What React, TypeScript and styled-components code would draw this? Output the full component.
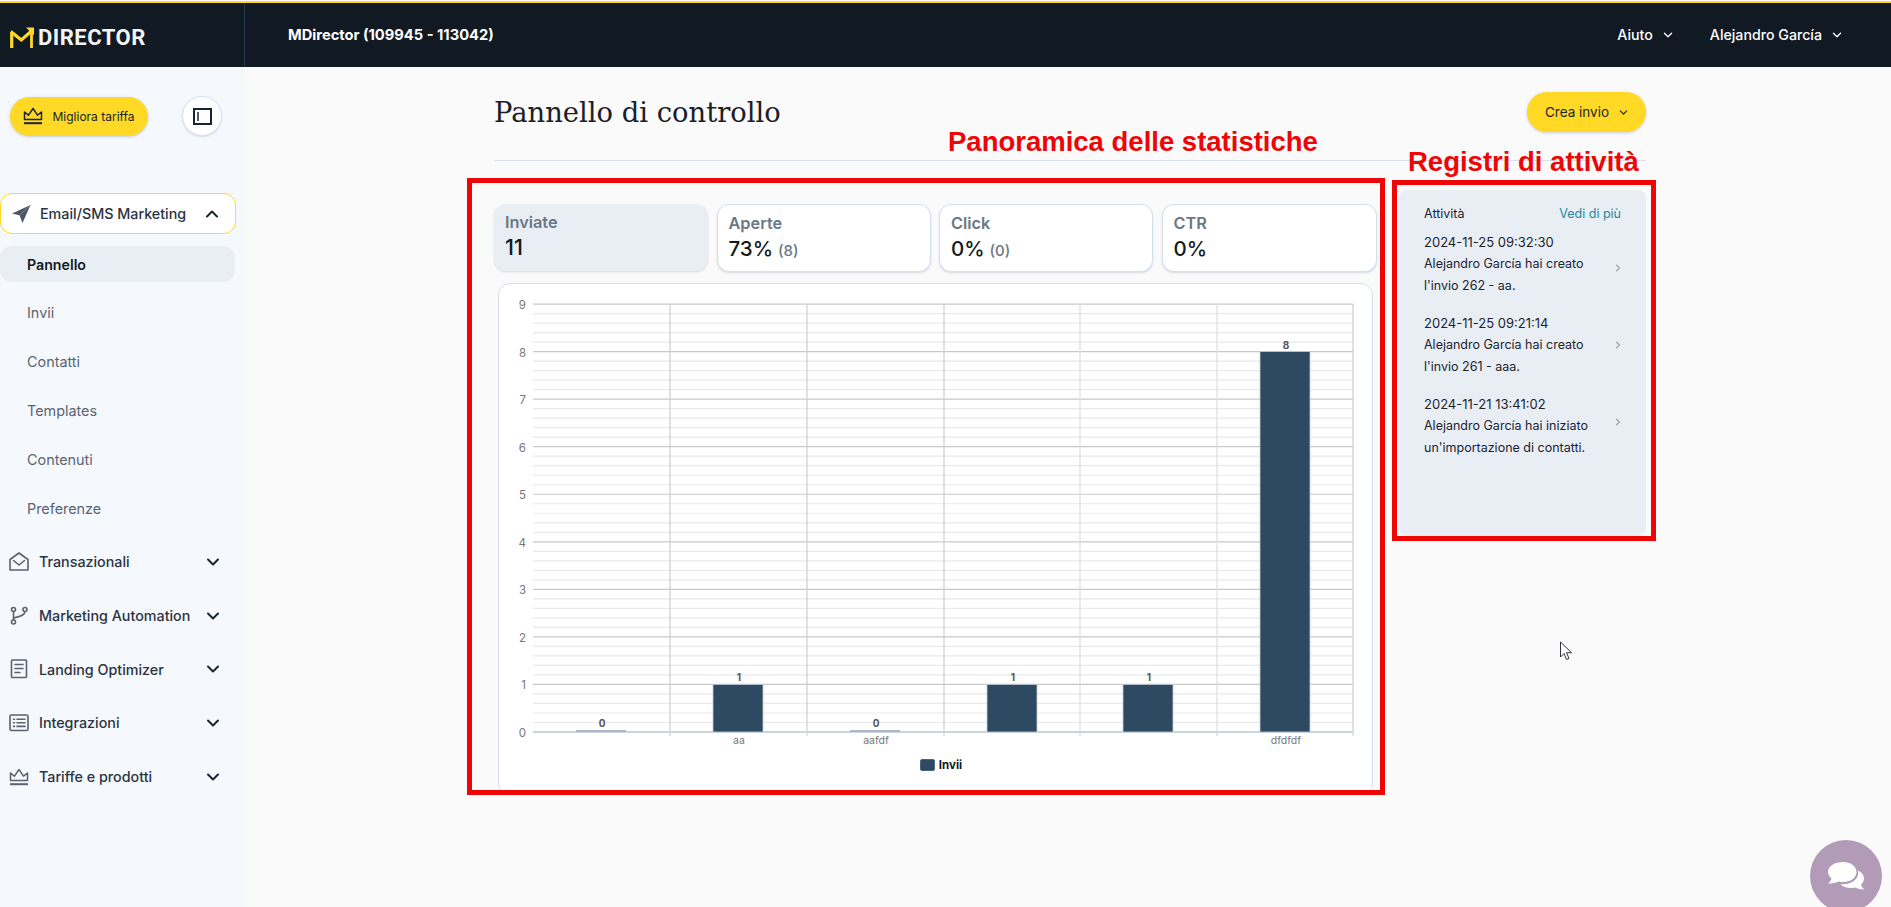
import React from "react";
import styled, { createGlobalStyle } from "styled-components";

const Global = createGlobalStyle`
  html, body { margin: 0; padding: 0; background: #fafafa; }
  body { font-family: Inter, "Liberation Sans", sans-serif; color: #111a22; overflow: hidden; }
  * { box-sizing: border-box; }
`;

const Page = styled.div`
  position: relative;
  width: 1891px;
  height: 907px;
  overflow: hidden;
  display: flex;
  flex-direction: column;
`;

const TopBar = styled.header`
  height: 66px;
  margin-top: 1px;
  flex: none;
  display: flex;
  background: #111a22;
  border-top: 2px solid #ffd925;
`;

const Brand = styled.div`
  width: 245px;
  flex: none;
  display: flex;
  align-items: center;
  gap: 4px;
  padding: 4px 0 0 10px;
  border-right: 1px solid #24394f;
`;

const BrandText = styled.span`
  font-family: Roboto, sans-serif;
  font-weight: 700;
  font-size: 22px;
  letter-spacing: 0.5px;
  color: #f4f5f6;
`;

const TopBarRow = styled.div`
  flex: 1;
  display: flex;
  align-items: center;
  justify-content: space-between;
  padding: 0 49px 0 43px;
  margin-top: -1px;
  color: #fff;
`;

const Account = styled.span`
  font-weight: 700;
  font-size: 14.7px;
`;

const TopMenu = styled.div`
  display: flex;
  gap: 37px;
`;

const TopMenuItem = styled.span`
  display: flex;
  align-items: center;
  gap: 10px;
  font-weight: 500;
  font-size: 14.2px;
`;

const Body = styled.div`
  flex: 1;
  display: flex;
  min-height: 0;
`;

const Sidebar = styled.aside`
  width: 244px;
  flex: none;
  background: #f5f8fd;
  display: flex;
  flex-direction: column;
  padding-top: 29px;
`;

const SidebarTools = styled.div`
  display: flex;
  align-items: center;
  gap: 34px;
  padding-left: 10px;
  margin-bottom: 57px;
`;

const UpgradeButton = styled.button`
  width: 138px;
  height: 39px;
  display: flex;
  align-items: center;
  justify-content: center;
  gap: 9px;
  border: 0;
  border-radius: 20px;
  background: #ffd925;
  box-shadow: 0 1px 3px rgba(60, 70, 90, 0.25);
  font: 400 12px Inter, sans-serif;
  color: #1a2430;
  padding: 0;
`;

const RoundButton = styled.button`
  width: 40px;
  height: 40px;
  display: flex;
  align-items: center;
  justify-content: center;
  border-radius: 50%;
  border: 1px solid #d7e2ee;
  background: #fff;
  box-shadow: 0 1px 2px rgba(60, 70, 90, 0.15);
  padding: 0;
`;

const OpenGroup = styled.div`
  height: 41px;
  width: 236px;
  display: flex;
  align-items: center;
  padding-left: 10px;
  border: 1px solid #ffd925;
  border-radius: 12px;
  background: #fff;
  font-size: 14.3px;
  font-weight: 500;
  color: #2a3442;
  margin-bottom: 12px;
`;

const GroupIcon = styled.span`
  width: 29px;
  flex: none;
  display: flex;
  align-items: center;
`;

const GroupLabel = styled.span`
  flex: 1;
  white-space: nowrap;
`;

const GroupChevron = styled.span`
  width: 30px;
  flex: none;
  display: flex;
  align-items: center;
`;

const SubItem = styled.div<{ $active?: boolean }>`
  height: ${(p) => (p.$active ? 36 : 48.8)}px;
  width: 235px;
  display: flex;
  align-items: center;
  padding-left: 27px;
  margin-bottom: ${(p) => (p.$active ? 6.5 : 0)}px;
  border-radius: 12px;
  background: ${(p) => (p.$active ? "#e9eef5" : "transparent")};
  font-size: ${(p) => (p.$active ? 14.2 : 14.4)}px;
  font-weight: ${(p) => (p.$active ? 600 : 400)};
  color: ${(p) => (p.$active ? "#111a22" : "#5b6472")};
`;

const GroupRow = styled.div`
  height: 53.7px;
  width: 236px;
  display: flex;
  align-items: center;
  padding-left: 9px;
  font-size: 14.3px;
  font-weight: 500;
  color: #2a3442;
`;

const RowIcon = styled(GroupIcon)`
  width: 30px;
`;

const SubList = styled.div`
  display: flex;
  flex-direction: column;
  margin-bottom: 2.5px;
`;

const Main = styled.main`
  flex: 1;
  padding: 25px 0 0 250px;
  width: 1402px;
`;

const Content = styled.div`
  width: 1152px;
`;

const TitleRow = styled.div`
  height: 69px;
  display: flex;
  justify-content: space-between;
  align-items: flex-start;
  border-bottom: 1px solid #d8e2ee;
`;

const Title = styled.h1`
  margin: 1px 0 0;
  font-family: "DejaVu Serif", "Liberation Serif", serif;
  font-weight: 400;
  font-size: 27.4px;
  line-height: 40px;
  color: #1a2028;
`;

const CreateButton = styled.button`
  width: 119px;
  height: 40px;
  display: flex;
  align-items: center;
  justify-content: center;
  gap: 10px;
  border: 0;
  border-radius: 20px;
  background: #ffd925;
  box-shadow: 0 1px 3px rgba(60, 70, 90, 0.25);
  font: 400 13.5px Inter, sans-serif;
  color: #1a2430;
  padding: 0;
`;

const Dashboard = styled.div`
  display: flex;
  gap: 22px;
  margin-top: 29px;
`;

const StatsColumn = styled.section`
  width: 883px;
  flex: none;
  padding-top: 14px;
`;

const StatGrid = styled.div`
  display: grid;
  grid-template-columns: 214px 214px 214px 1fr;
  gap: 8.5px;
  align-items: start;
`;

const StatCard = styled.div<{ $active?: boolean }>`
  height: ${(p) => (p.$active ? 67 : 68)}px;
  border-radius: 12px;
  padding: 9px 11px 0;
  background: ${(p) => (p.$active ? "#e9eef5" : "#fff")};
  border: ${(p) => (p.$active ? "0" : "1px solid #d3e0ee")};
  box-shadow: 0 1px 2px rgba(70, 90, 120, 0.2);
`;

const StatLabel = styled.div`
  font-size: 16.3px;
  font-weight: 600;
  line-height: 18px;
  color: #6b7785;
`;

const StatValue = styled.div<{ $active?: boolean }>`
  font-size: ${(p) => (p.$active ? 21.5 : 20.5)}px;
  font-weight: 500;
  line-height: 28px;
  margin-top: ${(p) => (p.$active ? 2 : 3)}px;
  color: #111a22;
`;

const StatSub = styled.span`
  font-size: 15px;
  font-weight: 500;
  color: #6b7785;
  margin-left: 5px;
`;

const ChartCard = styled.div`
  height: 512px;
  margin: 11px 4px 0;
  background: #fff;
  border: 1px solid #d3e0ee;
  border-radius: 12px;
  overflow: hidden;
`;

const ChartSvg = styled.svg`
  display: block;
  width: 873px;
  height: 468px;
`;

const Legend = styled.div`
  display: flex;
  align-items: center;
  justify-content: center;
  gap: 4px;
  margin-top: 6px;
  padding-left: 11px;
  font-size: 11.5px;
  font-weight: 700;
  color: #111a22;
`;

const LegendSwatch = styled.span`
  width: 15px;
  height: 12px;
  border-radius: 2px;
  background: #2e4a62;
  border: 1px solid #4a6580;
`;

const ActivityPanel = styled.aside`
  width: 247px;
  height: 346px;
  flex: none;
  background: #e9eef5;
  border-radius: 8px;
  padding: 16px 25px;
  font-size: 13px;
  color: #1a2430;
`;

const ActivityHead = styled.div`
  display: flex;
  justify-content: space-between;
  font-size: 12.5px;
  line-height: 16px;
  margin-bottom: 10px;
`;

const MoreLink = styled.span`
  color: #1f8a9a;
  font-size: 12.5px;
`;

const ActivityItem = styled.div`
  position: relative;
  margin-bottom: 16.5px;
  padding-right: 20px;
`;

const ActivityDate = styled.div`
  font-size: 13px;
  line-height: 20.5px;
`;

const ActivityText = styled.div`
  font-size: 12.5px;
  line-height: 22px;
  white-space: nowrap;
`;

const ActivityArrow = styled.span<{ $top: number }>`
  position: absolute;
  right: -1px;
  top: ${(p) => p.$top}px;
  display: flex;
`;

const AnnotationBox = styled.div<{ $x: number; $y: number; $w: number; $h: number }>`
  position: absolute;
  left: ${(p) => p.$x}px;
  top: ${(p) => p.$y}px;
  width: ${(p) => p.$w}px;
  height: ${(p) => p.$h}px;
  border: 5px solid #ee0505;
  pointer-events: none;
`;

const AnnotationText = styled.div<{ $x: number; $y: number }>`
  position: absolute;
  left: ${(p) => p.$x}px;
  top: ${(p) => p.$y}px;
  font-family: "Liberation Sans", Arial, sans-serif;
  font-weight: 700;
  font-size: 27.5px;
  line-height: 32px;
  color: #ee0505;
  white-space: nowrap;
`;

const ChatBubble = styled.div`
  position: absolute;
  left: 1810px;
  top: 840px;
  width: 72px;
  height: 72px;
  border-radius: 50%;
  background: #b19bb6;
  display: flex;
  align-items: center;
  justify-content: center;
`;

const CursorMark = styled.svg`
  position: absolute;
  left: 1559px;
  top: 641px;
`;

type Dir = "up" | "down" | "right";
const chevronPaths: Record<Dir, string> = {
  up: "M2 9.5 7 4.5l5 5",
  down: "M2 4.5l5 5 5-5",
  right: "M4.5 2l5 5-5 5",
};

const Chevron = ({ dir = "down", size = 14, color = "#1a2430", w = 2 }: { dir?: Dir; size?: number; color?: string; w?: number }) => (
  <svg width={size} height={size} viewBox="0 0 14 14" fill="none" stroke={color} strokeWidth={w} strokeLinecap="round" strokeLinejoin="round">
    <path d={chevronPaths[dir]} />
  </svg>
);

const Crown = ({ color = "#1a2430", sw = 1.5 }: { color?: string; sw?: number }) => (
  <svg width="20" height="18" viewBox="0 0 20 18" fill="none" stroke={color} strokeWidth={sw} strokeLinejoin="round">
    <path d="M1.5 12.5V5l4 3.2L10 1.5l4.500 6.700 4-3.200v7.500z" />
    <path d="M1 16.200h18" strokeWidth="2" />
  </svg>
);

const iconProps = { width: 20, height: 20, viewBox: "0 0 20 20", fill: "none", stroke: "#5a6270", strokeWidth: 1.6, strokeLinejoin: "round" as const, strokeLinecap: "round" as const };

const PlaneIcon = () => (
  <svg width="20" height="20" viewBox="0 0 20 20">
    <path d="M19.500 1 1 9.500l7.500 1.800L11.500 19z" fill="#4e5564" />
    <path d="M19.500 1 8.500 11.300" stroke="#8b92a0" strokeWidth="0.8" />
  </svg>
);

const MailIcon = () => (
  <svg {...iconProps}>
    <path d="M1 7.500 10 1l9 6.500V18H1z" />
    <path d="M4.500 8.500 10 13l5.500-4.500" />
  </svg>
);

const BranchIcon = () => (
  <svg {...iconProps}>
    <circle cx="4.500" cy="3.500" r="2" />
    <circle cx="4.500" cy="16" r="2" />
    <circle cx="16" cy="3.500" r="2" />
    <path d="M4.500 5.500V14M16 5.500C16 9.500 10 10.500 5 12" />
  </svg>
);

const DocIcon = () => (
  <svg {...iconProps}>
    <rect x="2.500" y="1" width="15" height="17.500" rx="1" />
    <path d="M6 5.500h8M6 9.500h8M6 13.500h5" />
  </svg>
);

const ListIcon = () => (
  <svg {...iconProps}>
    <rect x="1" y="2" width="18" height="15.500" rx="1.500" />
    <path d="M4.500 6.200h1M8 6.200h8M4.500 9.800h1M8 9.800h8M4.500 13.400h1M8 13.400h8" />
  </svg>
);

const groups: [string, React.ReactNode][] = [
  ["Transazionali", <MailIcon />],
  ["Marketing Automation", <BranchIcon />],
  ["Landing Optimizer", <DocIcon />],
  ["Integrazioni", <ListIcon />],
  ["Tariffe e prodotti", <Crown color="#5a6270" />],
];

const subs = ["Invii", "Contatti", "Templates", "Contenuti", "Preferenze"];

const stats = [
  { label: "Inviate", value: "11", active: true },
  { label: "Aperte", value: "73%", sub: "(8)" },
  { label: "Click", value: "0%", sub: "(0)" },
  { label: "CTR", value: "0%" },
];

const activities = [
  { date: "2024-11-25 09:32:30", l1: "Alejandro García hai creato", l2: "l'invio 262 - aa.", arrow: 32 },
  { date: "2024-11-25 09:21:14", l1: "Alejandro García hai creato", l2: "l'invio 261 - aaa.", arrow: 27.5 },
  { date: "2024-11-21 13:41:02", l1: "Alejandro García hai iniziato", l2: "un'importazione di contatti.", arrow: 24 },
];

const bars = [
  { x: 576, v: 0, label: "" },
  { x: 713, v: 1, label: "aa" },
  { x: 850, v: 0, label: "aafdf" },
  { x: 987, v: 1, label: "" },
  { x: 1123, v: 1, label: "" },
  { x: 1260, v: 8, label: "dfdfdf" },
];

const X0 = 533;
const X1 = 1353;
const Y0 = 732;
const UNIT = 47.55;
const columns = [670, 807, 944, 1080, 1217, 1353];

const BarChart = () => {
  const minor: number[] = [];
  for (let i = 0; i < 45; i++) if (i % 5 !== 0) minor.push(Y0 - (i * UNIT) / 5);
  return (
    <ChartSvg viewBox="499 284 873 468">
      {minor.map((y) => (
        <line key={y} x1={X0} x2={X1} y1={y} y2={y} stroke="#e9e9e9" strokeWidth="1.2" />
      ))}
      {Array.from({ length: 9 }, (_, i) => i + 1).map((n) => (
        <line key={n} x1={X0} x2={X1} y1={Y0 - n * UNIT} y2={Y0 - n * UNIT} stroke="#c8c8c8" strokeWidth="1.200" />
      ))}
      {columns.map((x, i) => (
        <g key={x}>
          <line x1={x} x2={x} y1={Y0 - 9 * UNIT} y2={Y0} stroke={i >= 3 && i < 5 ? "#dedede" : "#cdcdcd"} strokeWidth="1.200" />
          <line x1={x} x2={x} y1={Y0} y2={Y0 + 4} stroke="#cbd5e0" strokeWidth="1.200" />
        </g>
      ))}
      <line x1={X0} x2={X1} y1={Y0} y2={Y0} stroke="#cbd5e0" strokeWidth="2" />
      {Array.from({ length: 10 }, (_, i) => i).map((n) => (
        <text key={n} x="526" y={Y0 - n * UNIT + 5} textAnchor="end" fontSize="11.5" fontFamily="Inter, sans-serif" fill="#777">
          {n}
        </text>
      ))}
      {bars.map((b, i) => (
        <g key={i}>
          {b.v === 0 ? (
            <rect x={b.x} y={Y0 - 2} width="50" height="2" fill="#aeb8c4" />
          ) : (
            <rect x={b.x} y={Y0 - b.v * UNIT} width="50" height={b.v * UNIT} fill="#2e4a62" stroke="#c3cdd8" strokeWidth="0.8" />
          )}
          <text x={b.x + 26} y={Y0 - b.v * UNIT - 3 - (b.v === 0 ? 2 : 0)} textAnchor="middle" fontSize="10" fontWeight="700" fontFamily="Inter, sans-serif" fill="#555">
            {b.v}
          </text>
          {b.label && (
            <text x={b.x + 26} y={Y0 + 12} textAnchor="middle" fontSize="10.5" fontFamily="Inter, sans-serif" fill="#777">
              {b.label}
            </text>
          )}
        </g>
      ))}
    </ChartSvg>
  );
};

export default function App() {
  return (
    <Page>
      <Global />
      <TopBar>
        <Brand>
          <svg width="24" height="21" viewBox="0 0 24 21" fill="none" stroke="#ffd925" strokeWidth="3.200">
            <path d="M1.700 21V5.500" />
            <path d="M0.800 4.500 11.300 13 21 4.500" />
            <path d="M21.500 21V6" strokeWidth="2.800" />
            <path d="M16 0.500h8v8z" fill="#ffd925" stroke="none" />
          </svg>
          <BrandText>DIRECTOR</BrandText>
        </Brand>
        <TopBarRow>
          <Account>MDirector (109945 - 113042)</Account>
          <TopMenu>
            <TopMenuItem>
              Aiuto <Chevron size={10} color="#fff" w={1.800} />
            </TopMenuItem>
            <TopMenuItem>
              Alejandro García <Chevron size={10} color="#fff" w={1.800} />
            </TopMenuItem>
          </TopMenu>
        </TopBarRow>
      </TopBar>
      <Body>
        <Sidebar>
          <SidebarTools>
            <UpgradeButton>
              <Crown />
              Migliora tariffa
            </UpgradeButton>
            <RoundButton aria-label="panel">
              <svg width="19" height="17" viewBox="0 0 19 17" fill="none" stroke="#1a2430">
                <rect x="1" y="1" width="17" height="15" strokeWidth="2" />
                <path d="M5 4v9" strokeWidth="1.500" />
              </svg>
            </RoundButton>
          </SidebarTools>
          <OpenGroup>
            <GroupIcon>
              <PlaneIcon />
            </GroupIcon>
            <GroupLabel>Email/SMS Marketing</GroupLabel>
            <GroupChevron>
              <Chevron dir="up" />
            </GroupChevron>
          </OpenGroup>
          <SubList>
            <SubItem $active>Pannello</SubItem>
            {subs.map((s) => (
              <SubItem key={s}>{s}</SubItem>
            ))}
          </SubList>
          {groups.map(([label, icon]) => (
            <GroupRow key={label}>
              <RowIcon>{icon}</RowIcon>
              <GroupLabel>{label}</GroupLabel>
              <GroupChevron>
                <Chevron />
              </GroupChevron>
            </GroupRow>
          ))}
        </Sidebar>
        <Main>
          <Content>
            <TitleRow>
              <Title>Pannello di controllo</Title>
              <CreateButton>
                Crea invio <Chevron size={9} w={1.800} />
              </CreateButton>
            </TitleRow>
            <Dashboard>
              <StatsColumn>
                <StatGrid>
                  {stats.map((s) => (
                    <StatCard key={s.label} $active={s.active}>
                      <StatLabel>{s.label}</StatLabel>
                      <StatValue $active={s.active}>
                        {s.value}
                        {s.sub && <StatSub>{s.sub}</StatSub>}
                      </StatValue>
                    </StatCard>
                  ))}
                </StatGrid>
                <ChartCard>
                  <BarChart />
                  <Legend>
                    <LegendSwatch />
                    Invii
                  </Legend>
                </ChartCard>
              </StatsColumn>
              <ActivityPanel>
                <ActivityHead>
                  <span>Attività</span>
                  <MoreLink>Vedi di più</MoreLink>
                </ActivityHead>
                {activities.map((a) => (
                  <ActivityItem key={a.date}>
                    <ActivityDate>{a.date}</ActivityDate>
                    <ActivityText>{a.l1}</ActivityText>
                    <ActivityText>{a.l2}</ActivityText>
                    <ActivityArrow $top={a.arrow}>
                      <Chevron dir="right" size={8} color="#a3a8af" w={2.400} />
                    </ActivityArrow>
                  </ActivityItem>
                ))}
              </ActivityPanel>
            </Dashboard>
          </Content>
        </Main>
      </Body>
      <AnnotationBox $x={467} $y={178} $w={918} $h={617} />
      <AnnotationBox $x={1392} $y={180} $w={264} $h={361} />
      <AnnotationText $x={948} $y={126}>Panoramica delle statistiche</AnnotationText>
      <AnnotationText $x={1408} $y={146}>Registri di attività</AnnotationText>
      <CursorMark width="14" height="20" viewBox="0 0 14 20" fill="#fff" stroke="#2a3442" strokeWidth="1">
        <path d="M1.500 1v15l3.500-3.500 2.500 6 2.500-1-2.500-5.800h5z" />
      </CursorMark>
      <ChatBubble>
        <svg width="38" height="30" viewBox="0 0 38 30" fill="#fff">
          <path d="M16 1c7.500 0 13.500 4 13.500 10S23.500 21 16 21c-1.500 0-3 0-4.500-.5C9 22 5 22.500 1 22.500c1.500-1 3-3 3.500-5C2.500 15.500 1 13.500 1 11 1 5 8 1 16 1z" />
          <path d="M31 9.500c3.500 1.500 6 4.500 6 8 0 2.500-1.200 4.500-3 6 .5 2 1.800 4 3.500 5-3.500 0-7-.7-9.500-2-1.500.5-3 .5-4.500.5-4 0-8-1.500-10-4 9 1 19-3 17.500-13.500z" />
        </svg>
      </ChatBubble>
    </Page>
  );
}
